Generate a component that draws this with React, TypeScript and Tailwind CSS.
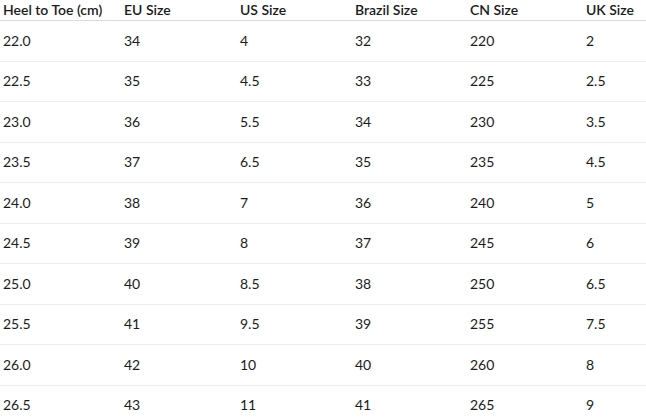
const headers = ['Heel to Toe (cm)', 'EU Size', 'US Size', 'Brazil Size', 'CN Size', 'UK Size'];

const rows: string[][] = [
  ['22.0', '34', '4', '32', '220', '2'],
  ['22.5', '35', '4.5', '33', '225', '2.5'],
  ['23.0', '36', '5.5', '34', '230', '3.5'],
  ['23.5', '37', '6.5', '35', '235', '4.5'],
  ['24.0', '38', '7', '36', '240', '5'],
  ['24.5', '39', '8', '37', '245', '6'],
  ['25.0', '40', '8.5', '38', '250', '6.5'],
  ['25.5', '41', '9.5', '39', '255', '7.5'],
  ['26.0', '42', '10', '40', '260', '8'],
  ['26.5', '43', '11', '41', '265', '9'],
];

const cols = 'grid grid-cols-[121px_116px_115px_115px_116px_1fr]';

export default function App() {
  return (
    <div className="w-[646px] h-[417px] overflow-hidden bg-white text-[14px] text-[#1b1b1b] font-['Segoe_UI',Lato,sans-serif]">
      <div className={`${cols} h-[21px] border-b border-[#dcdcdc] items-center font-semibold`}>
        {headers.map((h) => (
          <div key={h} className="pl-[3px] leading-[20px] whitespace-nowrap">
            {h}
          </div>
        ))}
      </div>
      {rows.map((r) => (
        <div key={r[0]} className={`${cols} h-[40.5px] border-b border-[#ececec] items-center`}>
          {r.map((c, i) => (
            <div key={i} className="pl-[3px] leading-[20px]">
              {c}
            </div>
          ))}
        </div>
      ))}
    </div>
  );
}
